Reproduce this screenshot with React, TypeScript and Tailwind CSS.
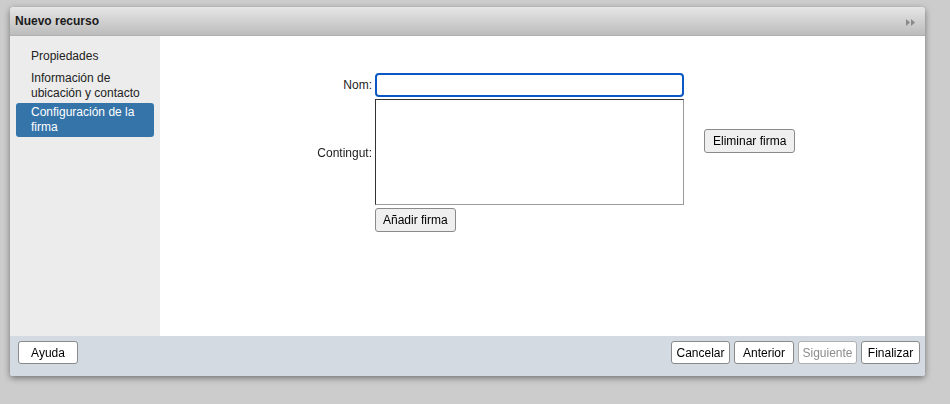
export default function App() {
  const font = { fontFamily: '"Liberation Sans", Arial, sans-serif' };
  return (
    <div className="w-[950px] h-[404px] bg-[#cccccc] pt-[7px] pl-[10px] text-[12px] text-[#222]" style={font}>
      {/* Dialog */}
      <div className="w-[915px] h-[369px] flex flex-col bg-white rounded-t-[4px] rounded-b-[3px] shadow-[0_2px_6px_rgba(0,0,0,0.45)] overflow-hidden">
        {/* Title bar */}
        <div className="h-[29px] flex items-center justify-between px-[5px] bg-gradient-to-b from-[#e6e6e6] to-[#bcbcbc] border-b border-[#b0b0b0]">
          <span className="font-bold text-[12px] text-[#1a1a1a]">Nuevo recurso</span>
          <svg width="9" height="7" viewBox="0 0 9 7" className="mr-[5px] mt-[3px]">
            <polygon points="0,0 4,3.5 0,7" fill="#8a8a8a" />
            <polygon points="5,0 9,3.5 5,7" fill="#8a8a8a" />
          </svg>
        </div>

        {/* Body */}
        <div className="flex flex-1">
          {/* Sidebar */}
          <div className="w-[150px] bg-[#ececec] pt-[12px] px-[6px]">
            <div className="pl-[15px] pr-[2px] py-[1px] leading-[14px]">Propiedades</div>
            <div className="pl-[15px] pr-[2px] pt-[7px] leading-[15px]">Información de ubicación y contacto</div>
            <div className="mt-[2px] pl-[15px] pr-[2px] py-[2px] leading-[15px] bg-[#3574a8] text-white rounded-[3px]">
              Configuración de la firma
            </div>
          </div>

          {/* Content */}
          <div className="flex-1 pt-[37px]">
            <div className="grid grid-cols-[212px_309px_auto] gap-x-[3px]">
              <div className="text-right self-center">Nom:</div>
              <input
                autoFocus
                className="h-[24px] border-2 border-[#0b57c4] rounded-[4px] outline-none px-1"
              />
              <div />

              <div className="text-right self-center pt-[4px]">Contingut:</div>
              <textarea className="mt-[2px] h-[106px] border border-[#9a9a9a] border-t-[#333] border-l-[#333] resize-none outline-none" />
              <div className="self-center pl-[17px] pb-[20px]">
                <button className="h-[24px] px-[8px] bg-[#efefef] border border-[#8a8a8a] rounded-[3px] text-[12px] text-black">
                  Eliminar firma
                </button>
              </div>

              <div />
              <div className="mt-[3px]">
                <button className="h-[24px] px-[7px] bg-[#efefef] border border-[#8a8a8a] rounded-[3px] text-[12px] text-black">
                  Añadir firma
                </button>
              </div>
              <div />
            </div>
          </div>
        </div>

        {/* Footer */}
        <div className="h-[40px] bg-[#d4dae1] flex items-start justify-between pt-[5px] px-[8px] pr-[5px]">
          <button className="h-[23px] w-[60px] bg-white border border-[#8a8a8a] rounded-[3px] text-[12px] text-black">
            Ayuda
          </button>
          <div className="flex gap-[4px]">
            <button className="h-[23px] w-[59px] bg-white border border-[#8a8a8a] rounded-[3px] text-[12px] text-black">
              Cancelar
            </button>
            <button className="h-[23px] w-[60px] bg-white border border-[#8a8a8a] rounded-[3px] text-[12px] text-black">
              Anterior
            </button>
            <button className="h-[23px] w-[59px] bg-white border border-[#b0b0b0] rounded-[3px] text-[12px] text-[#8c8c8c]">
              Siguiente
            </button>
            <button className="h-[23px] w-[59px] bg-white border border-[#8a8a8a] rounded-[3px] text-[12px] text-black">
              Finalizar
            </button>
          </div>
        </div>
      </div>
    </div>
  );
}
